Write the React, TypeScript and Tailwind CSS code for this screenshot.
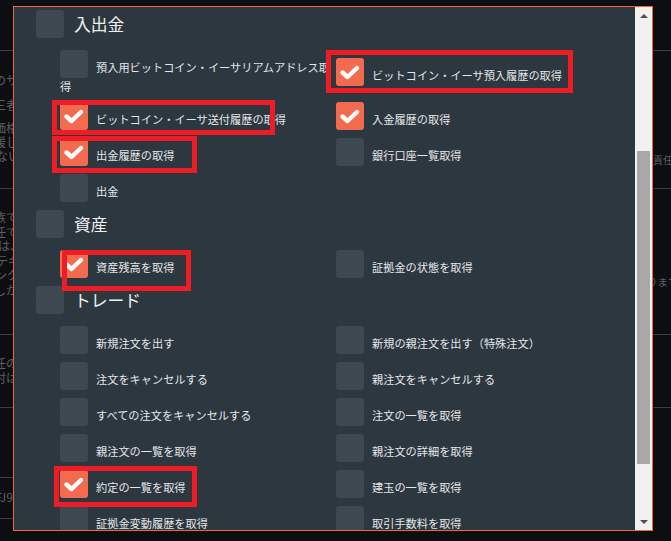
import clsx from "clsx";

interface Permission {
  label: string;
  checked?: boolean;
}

interface Section {
  title: string;
  items: Permission[];
}

const sections: Section[] = [
  {
    title: "入出金",
    items: [
      { label: "預入用ビットコイン・イーサリアムアドレス取得" },
      { label: "ビットコイン・イーサ預入履歴の取得", checked: true },
      { label: "ビットコイン・イーサ送付履歴の取得", checked: true },
      { label: "入金履歴の取得", checked: true },
      { label: "出金履歴の取得", checked: true },
      { label: "銀行口座一覧取得" },
      { label: "出金" },
    ],
  },
  {
    title: "資産",
    items: [{ label: "資産残高を取得", checked: true }, { label: "証拠金の状態を取得" }],
  },
  {
    title: "トレード",
    items: [
      { label: "新規注文を出す" },
      { label: "新規の親注文を出す（特殊注文）" },
      { label: "注文をキャンセルする" },
      { label: "親注文をキャンセルする" },
      { label: "すべての注文をキャンセルする" },
      { label: "注文の一覧を取得" },
      { label: "親注文の一覧を取得" },
      { label: "親注文の詳細を取得" },
      { label: "約定の一覧を取得", checked: true },
      { label: "建玉の一覧を取得" },
      { label: "証拠金変動履歴を取得" },
      { label: "取引手数料を取得" },
    ],
  },
];

// red annotation frames drawn over the screenshot
const highlights = [
  "left-[326px] top-[50px] w-[247px] h-[43px]",
  "left-[52px] top-[100px] w-[223px] h-[35px]",
  "left-[52px] top-[136px] w-[145px] h-[37px]",
  "left-[62px] top-[250px] w-[129px] h-[41px]",
  "left-[54px] top-[466px] w-[143px] h-[41px]",
];

const Box = ({ checked, className }: { checked?: boolean; className?: string }) => (
  <span
    className={clsx(
      "inline-block h-7 w-7 shrink-0 rounded-[3px]",
      checked ? "bg-[#f36b4f]" : "bg-[#3d4850]",
      className
    )}
  >
    {checked && (
      <svg viewBox="0 0 28 28" className="h-7 w-7">
        <path
          d="M6.5 14.5 L11.5 19 L21 10"
          fill="none"
          stroke="#ffffff"
          strokeWidth={4.4}
          strokeLinecap="round"
          strokeLinejoin="round"
        />
      </svg>
    )}
  </span>
);

const Triangle = ({ down }: { down?: boolean }) => (
  <svg viewBox="0 0 8 4" className="h-[4px] w-[8px]">
    <path d={down ? "M0 0 L8 0 L4 4 Z" : "M0 4 L8 4 L4 0 Z"} fill="#505050" />
  </svg>
);

export default function App() {
  return (
    <div
      className="relative h-[541px] w-[671px] overflow-hidden bg-[#0c0e11] text-[12px] text-[#5b5f64]"
      style={{ fontFamily: '"Noto Sans CJK JP", "Noto Sans", sans-serif' }}
    >
      {/* page behind the dialog */}
      <div className="flex flex-col">
        <div className="h-[51px] border-b border-[#3a3d42]" />
        <div className="flex h-[138px] justify-between border-b border-[#3a3d42] leading-[14px]">
          <div className="w-[13px] whitespace-nowrap pt-[22px]">
            <div className="-ml-[6px]">のサービス</div>
            <div className="-ml-[6px] mt-[11px]">三者</div>
            <div className="-ml-[6px] mt-[9px]">価格</div>
            <div className="-ml-[6px]">援し</div>
            <div className="-ml-[4px]">ない</div>
          </div>
          <div className="w-[18px] whitespace-nowrap pt-[102px] text-[10px]">責任</div>
        </div>
        <div className="flex h-[146px] justify-between border-b border-[#3a3d42] leading-[14.5px]">
          <div className="w-[13px] whitespace-nowrap pt-[21px]">
            <div className="-ml-[6px]">族で</div>
            <div className="-ml-[6px]">任で</div>
            <div className="-ml-[2px]">は、</div>
            <div className="-ml-[4px]">テキ</div>
            <div className="-ml-[5px]">ンク</div>
            <div className="-ml-[6px]">しか</div>
          </div>
          <div className="w-[18px] whitespace-nowrap pt-[86px] text-[10.5px]">
            <div className="-ml-[6px]">ります</div>
          </div>
        </div>
        <div className="flex h-[73px] justify-between border-b border-[#3a3d42] leading-[15px]">
          <div className="w-[13px] whitespace-nowrap pt-[20px]">
            <div className="-ml-[6px]">任の</div>
            <div className="-ml-[6px]">対は</div>
          </div>
        </div>
        <div className="h-[70px] w-[13px] border-b border-[#3a3d42]" />
        <div className="h-[41px] w-[13px] whitespace-nowrap border-b border-[#3a3d42] pt-[12px] leading-[14px]">
          <div className="-ml-[5px]">FJ9</div>
        </div>
      </div>

      {/* permissions dialog */}
      <div className="absolute left-[13px] top-[6px] flex h-[525px] w-[640px] overflow-hidden border border-[#f26440] bg-[#2d3740]">
        <div className="flex-1 overflow-hidden pl-[22px] pt-[3px]">
          {sections.map((section, i) => (
            <div key={section.title} className={clsx(i > 0 && "mt-2")}>
              <div className="flex h-7 items-center gap-[10px]">
                <Box />
                <span className="text-[16.8px] leading-none text-[#f0f1f2]">{section.title}</span>
              </div>
              <div className="ml-6 mt-3 grid grid-cols-[276px_276px] items-center gap-y-2">
                {section.items.map((item) => (
                  <div key={item.label} className="text-[11.2px] leading-[16px] text-[#e4e6e8]">
                    <Box checked={item.checked} className="mr-2 align-[-6px]" />
                    {item.label}
                  </div>
                ))}
              </div>
            </div>
          ))}
        </div>
        <div className="flex w-[17px] flex-col bg-[#f1f1f1]">
          <div className="flex h-[17px] items-center justify-center">
            <Triangle />
          </div>
          <div className="mx-[2px] mt-[127px] h-[313px] bg-[#a8a8a8]" />
          <div className="flex-1" />
          <div className="flex h-[17px] items-center justify-center">
            <Triangle down />
          </div>
        </div>
      </div>

      {highlights.map((pos) => (
        <div key={pos} className={clsx("pointer-events-none absolute border-[5px] border-[#ee1c25]", pos)} />
      ))}
    </div>
  );
}
